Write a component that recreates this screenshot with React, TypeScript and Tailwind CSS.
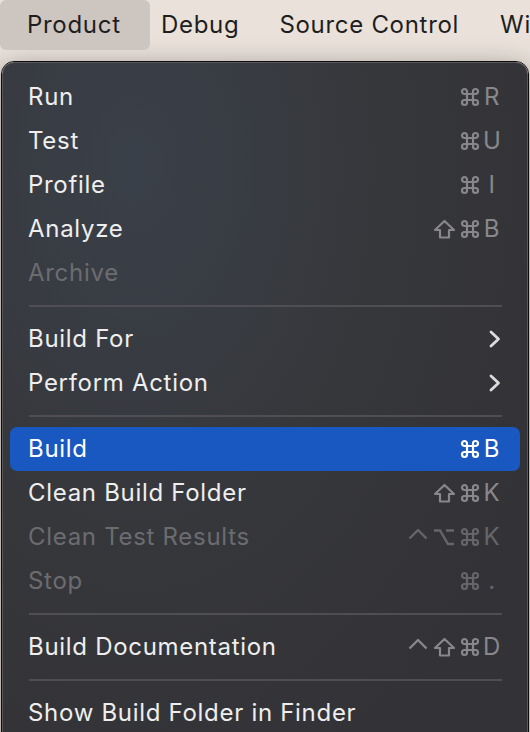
import { Fragment } from 'react'

type Item =
    | { kind: 'sep' }
    | {
          kind: 'item'
          label: string
          keys?: string[]
          disabled?: boolean
          submenu?: boolean
          active?: boolean
      }

const items: Item[] = [
    { kind: 'item', label: 'Run', keys: ['', '', 'cmd', 'R'] },
    { kind: 'item', label: 'Test', keys: ['', '', 'cmd', 'U'] },
    { kind: 'item', label: 'Profile', keys: ['', '', 'cmd', 'I'] },
    { kind: 'item', label: 'Analyze', keys: ['', 'shift', 'cmd', 'B'] },
    { kind: 'item', label: 'Archive', disabled: true },
    { kind: 'sep' },
    { kind: 'item', label: 'Build For', submenu: true },
    { kind: 'item', label: 'Perform Action', submenu: true },
    { kind: 'sep' },
    { kind: 'item', label: 'Build', keys: ['', '', 'cmd', 'B'], active: true },
    { kind: 'item', label: 'Clean Build Folder', keys: ['', 'shift', 'cmd', 'K'] },
    { kind: 'item', label: 'Clean Test Results', keys: ['ctrl', 'opt', 'cmd', 'K'], disabled: true },
    { kind: 'item', label: 'Stop', keys: ['', '', 'cmd', '.'], disabled: true },
    { kind: 'sep' },
    { kind: 'item', label: 'Build Documentation', keys: ['ctrl', 'shift', 'cmd', 'D'] },
    { kind: 'sep' },
    { kind: 'item', label: 'Show Build Folder in Finder' },
]

function Chevron() {
    return (
        <svg width="12" height="18" viewBox="0 0 12 18" fill="none">
            <path d="M2 2l7.5 7-7.5 7" stroke="#dcdcdc" strokeWidth="2.8" strokeLinecap="round" strokeLinejoin="round" />
        </svg>
    )
}

// modifier key glyphs, drawn to match the macOS menu symbols
function Mod({ name }: { name: string }) {
    if (name === 'cmd')
        return (
            <svg width="20" height="20" viewBox="0 0 20 20" fill="none" stroke="currentColor" strokeWidth="2.2">
                <path d="M7 7V4.5A2.5 2.5 0 1 0 4.5 7H15.5A2.5 2.5 0 1 0 13 4.5V15.5A2.5 2.5 0 1 0 15.5 13H4.5A2.5 2.5 0 1 0 7 15.5Z" />
            </svg>
        )
    if (name === 'shift')
        return (
            <svg width="23" height="20" viewBox="0 0 23 20" fill="none" stroke="currentColor" strokeWidth="2.2" strokeLinejoin="round">
                <path d="M11.5 2L21 11H16V18.5H7V11H2Z" />
            </svg>
        )
    if (name === 'opt')
        return (
            <svg width="22" height="20" viewBox="0 0 22 20" fill="none" stroke="currentColor" strokeWidth="2.4">
                <path d="M1 3.5H7L15 17H21M13 3.5H21" />
            </svg>
        )
    if (name === 'ctrl')
        return (
            <svg width="20" height="20" viewBox="0 0 20 20" fill="none" stroke="currentColor" strokeWidth="2.4" strokeLinejoin="round">
                <path d="M1.5 11.5L10 3L18.5 11.5" />
            </svg>
        )
    return null
}

function Shortcut({ keys, tone }: { keys: string[]; tone: string }) {
    return (
        <div className={`flex items-center ${tone}`}>
            <span className="flex w-[26px] justify-center">{keys[0] && <Mod name={keys[0]} />}</span>
            <span className="flex w-[26px] justify-center">{keys[1] && <Mod name={keys[1]} />}</span>
            <span className="flex w-[26px] justify-center">{keys[2] && <Mod name={keys[2]} />}</span>
            <span className="w-[18px] text-center">{keys[3]}</span>
        </div>
    )
}

export default function App() {
    return (
        <div className="h-[732px] w-[530px] overflow-hidden bg-[#e9e1da] font-['Inter',sans-serif] text-[24px] tracking-[0.7px] antialiased">
            {/* menu bar */}
            <div className="flex h-[61px] items-start whitespace-nowrap text-[#1e1e1e]">
                <div className="flex h-[50px] w-[150px] shrink-0 items-center rounded-[6px] bg-[#cdc5bf] pl-[27px]">Product</div>
                <div className="flex h-[50px] shrink-0 items-center pl-[11px]">Debug</div>
                <div className="flex h-[50px] shrink-0 items-center pl-[40px]">Source Control</div>
                <div className="flex h-[50px] shrink-0 items-center pl-[41px]">Window</div>
            </div>

            {/* dropdown */}
            <div className="ml-[1px] w-[528px] rounded-t-[13px] border border-[#0d0d0e] shadow-[0_8px_30px_rgba(0,0,0,0.4)]">
                <div className="rounded-t-[12px] border border-[#58585c] bg-[radial-gradient(ellipse_at_25%_15%,#3a4049_0%,#36373b_45%,#333337_80%)] pt-[12px] pb-[20px]">
                    {items.map((it, i) => (
                        <Fragment key={i}>
                            {it.kind === 'sep' ? (
                                <div className="flex h-[22px] items-center pl-[26px] pr-[25px]">
                                    <div className="h-[2px] w-full bg-[#4f4f53]" />
                                </div>
                            ) : (
                                <div
                                    className={`mx-[7px] flex h-[44px] items-center justify-between rounded-[7px] pl-[18px] pr-[19px] ${
                                        it.active ? 'bg-[#1958c0] text-white' : it.disabled ? 'text-[#6c6c70]' : 'text-[#eeeeee]'
                                    }`}
                                >
                                    <span>{it.label}</span>
                                    {it.submenu && <Chevron />}
                                    {it.keys && (
                                        <Shortcut
                                            keys={it.keys}
                                            tone={it.active ? 'text-white' : it.disabled ? 'text-[#66666a]' : 'text-[#88888c]'}
                                        />
                                    )}
                                </div>
                            )}
                        </Fragment>
                    ))}
                </div>
            </div>
        </div>
    )
}
